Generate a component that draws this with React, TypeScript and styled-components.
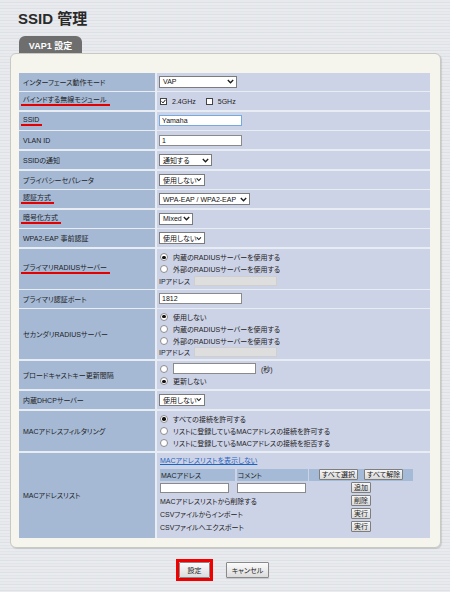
import React from "react";
import styled, { createGlobalStyle } from "styled-components";

const FONT = `"Liberation Sans", "Noto Sans CJK JP", sans-serif`;

const GlobalStyle = createGlobalStyle`
  html, body { margin: 0; padding: 0; }
  body {
    width: 450px;
    min-height: 592px;
    overflow: hidden;
    background-color: #e4e6ea;
    background-image: repeating-linear-gradient(180deg,
      #e7e9ed 0px, #e7e9ed 2px,
      #dde0e5 2px, #dde0e5 3px,
      #e9ebee 3px, #e9ebee 5px,
      #e1e4e8 5px, #e1e4e8 6px);
    font-family: ${FONT};
    color: #222;
    font-feature-settings: "palt";
  }
`;

const Page = styled.div`
  padding: 9px 9px 10px 10px;
`;

const Title = styled.h1`
  margin: 0 0 7px 8px;
  font-size: 15px;
  line-height: 20px;
  font-weight: bold;
  color: #2a2a2a;
`;

const Tab = styled.div`
  margin-left: 9px;
  width: 63px;
  height: 17px;
  box-sizing: border-box;
  padding-top: 1px;
  background: #6e6e6e;
  border-radius: 6px 6px 0 0;
  color: #fff;
  font-size: 9px;
  font-weight: bold;
  display: flex;
  align-items: center;
  justify-content: center;
`;

const Panel = styled.div`
  width: 431px;
  box-sizing: border-box;
  background: #f5f5ee;
  border: 1px solid #c9c9c3;
  border-radius: 6px;
  box-shadow: 1px 1px 1px rgba(0, 0, 0, 0.12);
  padding: 18.7px 10px 9px 8px;
`;

const FormTable = styled.div`
  display: grid;
  grid-template-columns: 136px 1fr;
  grid-template-rows: repeat(9, 18px) 39.6px 17.4px 49.8px 28.4px 18.7px 40.1px 85px;
  gap: 1.6px 2px;
  background: #e8ecf3;
`;

const LabelCell = styled.div`
  background: #a5b9d5;
  display: flex;
  align-items: center;
  padding: 0 4px;
  font-size: 7px;
  white-space: nowrap;
  color: #1e1e1e;
`;

const ValueCell = styled.div`
  background: #cdd3e7;
  display: flex;
  flex-direction: column;
  justify-content: center;
  align-items: flex-start;
  padding: 0 2px;
  font-size: 7px;
  white-space: nowrap;
  min-width: 0;
`;

const MacCell = styled(ValueCell)`
  padding-bottom: 3px;
`;

const Mark = styled.span`
  display: inline-block;
  line-height: 8px;
  margin-left: -2px;
  padding: 0 3px 0 2px;
  border-bottom: 2px solid #e30000;
`;

const Line = styled.div<{ $h?: number; $gap?: number }>`
  display: flex;
  align-items: center;
  height: ${(p) => p.$h ?? 12}px;
  gap: ${(p) => p.$gap ?? 5}px;
`;

const SelectBox = styled.span<{ $w: number }>`
  display: inline-flex;
  align-items: center;
  justify-content: space-between;
  width: ${(p) => p.$w}px;
  height: 12px;
  box-sizing: border-box;
  padding: 0 2px 0 3px;
  background: #fff;
  border: 1px solid #7b7b7b;
  font-size: 7px;
  color: #111;
`;

const TextBox = styled.span<{ $w: number; $h?: number; $state?: "focus" | "disabled" }>`
  display: inline-flex;
  align-items: center;
  width: ${(p) => p.$w}px;
  height: ${(p) => p.$h ?? 11}px;
  box-sizing: border-box;
  padding: 0 2px;
  font-size: 7px;
  color: #111;
  background: ${(p) => (p.$state === "disabled" ? "#dedede" : "#fff")};
  border: 1px solid
    ${(p) =>
      p.$state === "focus" ? "#76a9de" : p.$state === "disabled" ? "#cfcfcf" : "#8a8a8a"};
`;

const CheckBox = styled.span`
  display: inline-flex;
  align-items: center;
  justify-content: center;
  width: 7px;
  height: 7px;
  box-sizing: border-box;
  border: 1px solid #444;
  background: #fff;
  flex: none;
  margin-left: 1px;
`;

const CheckItem = styled.span<{ $after?: number }>`
  display: inline-flex;
  align-items: center;
  gap: 5px;
  margin-right: ${(p) => p.$after ?? 0}px;
`;

const Radio = styled.span<{ $on?: boolean }>`
  position: relative;
  flex: none;
  width: 8px;
  height: 8px;
  margin-left: 1px;
  box-sizing: border-box;
  border-radius: 50%;
  border: 1px solid #8c8c8c;
  background: #fff;
  &::after {
    content: "";
    display: ${(p) => (p.$on ? "block" : "none")};
    position: absolute;
    inset: 1.3px;
    border-radius: 50%;
    background: #111;
  }
`;

const IpLabel = styled.span`
  margin-right: 1px;
`;

const LinkText = styled.a`
  display: block;
  color: #1f63c0;
  text-decoration: underline;
  font-size: 7px;
  line-height: 12px;
  margin: 0 0 2px 1px;
  cursor: pointer;
`;

const MacGrid = styled.div`
  display: grid;
  grid-template-columns: 75px 71px 104px;
  grid-auto-rows: 12px;
  gap: 1px 1.5px;
  width: 253px;
  margin-left: 1px;
`;

const MacHead = styled.div<{ $center?: boolean }>`
  background: #a5bad6;
  display: flex;
  align-items: center;
  justify-content: ${(p) => (p.$center ? "center" : "flex-start")};
  gap: 6px;
  padding: 0 1px;
`;

const MacItem = styled.div<{ $span?: number; $center?: boolean }>`
  grid-column: span ${(p) => p.$span ?? 1};
  display: flex;
  align-items: center;
  justify-content: ${(p) => (p.$center ? "center" : "flex-start")};
`;

const SmallButton = styled.button`
  height: 11px;
  padding: 0 2px;
  box-sizing: border-box;
  font-family: ${FONT};
  font-feature-settings: "palt";
  font-size: 7px;
  line-height: 9px;
  color: #222;
  background: linear-gradient(#f6f6f6, #d9d9d9);
  border: 1px solid #7e7e7e;
  border-radius: 1px;
  white-space: nowrap;
`;

const ButtonBar = styled.div`
  display: flex;
  justify-content: center;
  align-items: center;
  gap: 13px;
  margin-top: 11px;
  padding-right: 6px;
`;

const Highlight = styled.div`
  display: flex;
  border: 3px solid #f20000;
`;

const ActionButton = styled.button<{ $w: number }>`
  width: ${(p) => p.$w}px;
  height: 16px;
  box-sizing: border-box;
  padding: 0;
  font-family: ${FONT};
  font-feature-settings: "palt";
  font-size: 7px;
  color: #222;
  background: linear-gradient(#fbfbfb, #dcdcdc);
  border: 1px solid #8a8a8a;
  border-radius: 1px;
  box-shadow: 0 1px 1px rgba(0, 0, 0, 0.12);
`;

const Chevron = () => (
  <svg width="7" height="5" viewBox="0 0 7 5">
    <polyline points="0.8,1 3.5,3.8 6.2,1" fill="none" stroke="#1a1a1a" strokeWidth="1.3" />
  </svg>
);

const Tick = () => (
  <svg width="5" height="5" viewBox="0 0 5 5">
    <polyline points="0.6,2.4 2,3.9 4.5,0.8" fill="none" stroke="#111" strokeWidth="1" />
  </svg>
);

const Select = ({ w, children }: { w: number; children: React.ReactNode }) => (
  <SelectBox $w={w}>
    <span>{children}</span>
    <Chevron />
  </SelectBox>
);

const RadioLine = ({ on, children }: { on?: boolean; children: React.ReactNode }) => (
  <Line>
    <Radio $on={on} />
    <span>{children}</span>
  </Line>
);

const IpLine = () => (
  <Line $h={11} $gap={3}>
    <IpLabel>IPアドレス</IpLabel>
    <TextBox $w={83} $h={10} $state="disabled" />
  </Line>
);

export default function App() {
  return (
    <>
      <GlobalStyle />
      <Page>
        <Title>SSID 管理</Title>
        <Tab>VAP1 設定</Tab>
        <Panel>
          <FormTable>
            <LabelCell>インターフェース動作モード</LabelCell>
            <ValueCell>
              <Select w={78}>VAP</Select>
            </ValueCell>

            <LabelCell>
              <Mark>バインドする無線モジュール</Mark>
            </LabelCell>
            <ValueCell>
              <Line $gap={0}>
                <CheckItem $after={9}>
                  <CheckBox>
                    <Tick />
                  </CheckBox>
                  2.4GHz
                </CheckItem>
                <CheckItem>
                  <CheckBox />
                  5GHz
                </CheckItem>
              </Line>
            </ValueCell>

            <LabelCell>
              <Mark>SSID</Mark>
            </LabelCell>
            <ValueCell>
              <TextBox $w={83} $state="focus">Yamaha</TextBox>
            </ValueCell>

            <LabelCell>VLAN ID</LabelCell>
            <ValueCell>
              <TextBox $w={83}>1</TextBox>
            </ValueCell>

            <LabelCell>SSIDの通知</LabelCell>
            <ValueCell>
              <Select w={53}>通知する</Select>
            </ValueCell>

            <LabelCell>プライバシーセパレータ</LabelCell>
            <ValueCell>
              <Select w={46}>使用しない</Select>
            </ValueCell>

            <LabelCell>
              <Mark>認証方式</Mark>
            </LabelCell>
            <ValueCell>
              <Select w={91}>WPA-EAP / WPA2-EAP</Select>
            </ValueCell>

            <LabelCell>
              <Mark>暗号化方式</Mark>
            </LabelCell>
            <ValueCell>
              <Select w={34}>Mixed</Select>
            </ValueCell>

            <LabelCell>WPA2-EAP 事前認証</LabelCell>
            <ValueCell>
              <Select w={46}>使用しない</Select>
            </ValueCell>

            <LabelCell>
              <Mark>プライマリRADIUSサーバー</Mark>
            </LabelCell>
            <ValueCell>
              <RadioLine on>内蔵のRADIUSサーバーを使用する</RadioLine>
              <RadioLine>外部のRADIUSサーバーを使用する</RadioLine>
              <IpLine />
            </ValueCell>

            <LabelCell>プライマリ認証ポート</LabelCell>
            <ValueCell>
              <TextBox $w={83}>1812</TextBox>
            </ValueCell>

            <LabelCell>セカンダリRADIUSサーバー</LabelCell>
            <ValueCell>
              <RadioLine on>使用しない</RadioLine>
              <RadioLine>内蔵のRADIUSサーバーを使用する</RadioLine>
              <RadioLine>外部のRADIUSサーバーを使用する</RadioLine>
              <IpLine />
            </ValueCell>

            <LabelCell>ブロードキャストキー更新間隔</LabelCell>
            <ValueCell>
              <Line $h={13} $gap={5}>
                <Radio />
                <TextBox $w={83}></TextBox>
                <span>(秒)</span>
              </Line>
              <RadioLine on>更新しない</RadioLine>
            </ValueCell>

            <LabelCell>内蔵DHCPサーバー</LabelCell>
            <ValueCell>
              <Select w={46}>使用しない</Select>
            </ValueCell>

            <LabelCell>MACアドレスフィルタリング</LabelCell>
            <ValueCell>
              <RadioLine on>すべての接続を許可する</RadioLine>
              <RadioLine>リストに登録しているMACアドレスの接続を許可する</RadioLine>
              <RadioLine>リストに登録しているMACアドレスの接続を拒否する</RadioLine>
            </ValueCell>

            <LabelCell>MACアドレスリスト</LabelCell>
            <MacCell>
              <LinkText>MACアドレスリストを表示しない</LinkText>
              <MacGrid>
                <MacHead>MACアドレス</MacHead>
                <MacHead>コメント</MacHead>
                <MacHead $center>
                  <SmallButton>すべて選択</SmallButton>
                  <SmallButton>すべて解除</SmallButton>
                </MacHead>

                <MacItem>
                  <TextBox $w={69} $h={10} />
                </MacItem>
                <MacItem>
                  <TextBox $w={69} $h={10} />
                </MacItem>
                <MacItem $center>
                  <SmallButton>追加</SmallButton>
                </MacItem>

                <MacItem $span={2}>MACアドレスリストから削除する</MacItem>
                <MacItem $center>
                  <SmallButton>削除</SmallButton>
                </MacItem>

                <MacItem $span={2}>CSVファイルからインポート</MacItem>
                <MacItem $center>
                  <SmallButton>実行</SmallButton>
                </MacItem>

                <MacItem $span={2}>CSVファイルへエクスポート</MacItem>
                <MacItem $center>
                  <SmallButton>実行</SmallButton>
                </MacItem>
              </MacGrid>
            </MacCell>
          </FormTable>
        </Panel>
        <ButtonBar>
          <Highlight>
            <ActionButton $w={31}>設定</ActionButton>
          </Highlight>
          <ActionButton $w={43}>キャンセル</ActionButton>
        </ButtonBar>
      </Page>
    </>
  );
}
